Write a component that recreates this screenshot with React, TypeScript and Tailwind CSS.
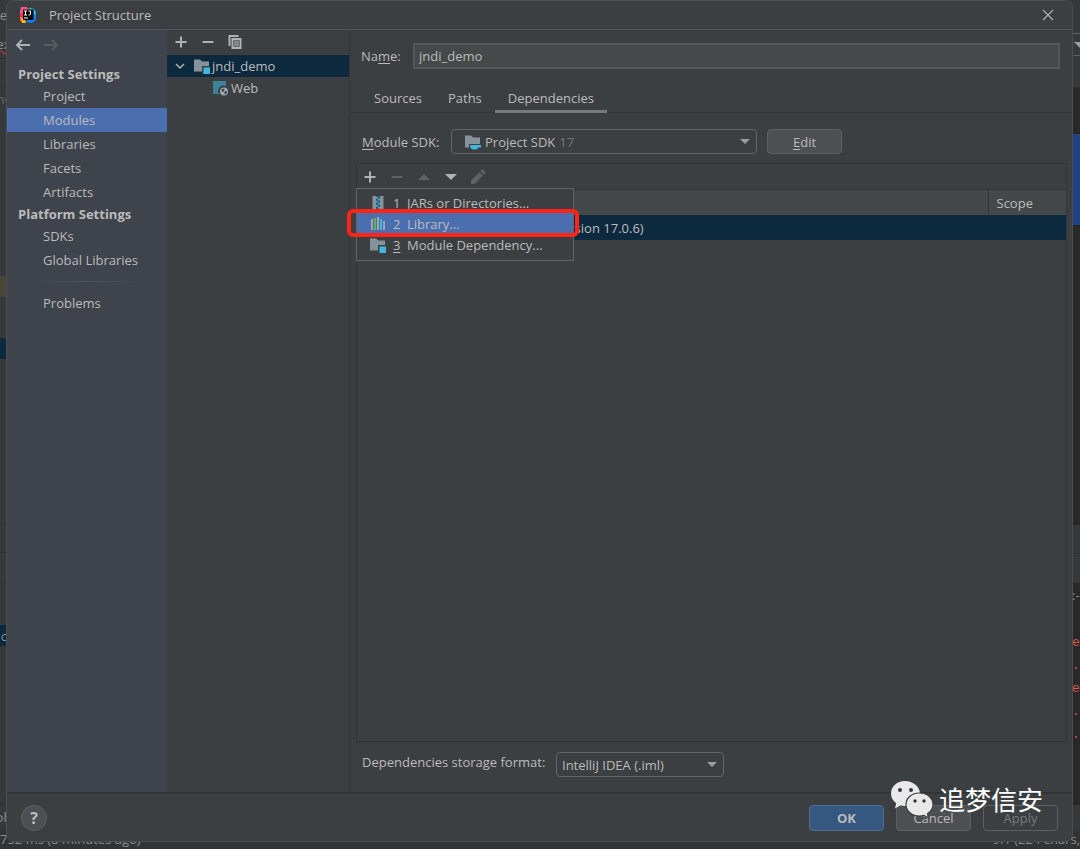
import { useState } from 'react';
import type { ReactNode } from 'react';

const settingsGroups = [
  { title: 'Project Settings', items: ['Project', 'Modules', 'Libraries', 'Facets', 'Artifacts'] },
  { title: 'Platform Settings', items: ['SDKs', 'Global Libraries'] },
];

const tabs = ['Sources', 'Paths', 'Dependencies'];

function IdeaLogo() {
  return (
    <svg className="w-[18px] h-[18px]" viewBox="0 0 18 18">
      <path d="M1 4 6 1l6 3-6 6-5 1z" fill="#fc801d" />
      <path d="M1 6 6 4v10l-2 3-3-2z" fill="#fe2857" />
      <path d="M2 1h6L7 6 1 8z" fill="#ff4f9a" />
      <path d="M11 1l6 4v9l-4 3-6-1 6-7z" fill="#0a84ff" />
      <path d="M10 2l5 1 2 5-4 1z" fill="#21c7e8" />
      <path d="M1 11l5 2 1 4-4 0z" fill="#fdb60d" />
      <rect x="4" y="3.500" width="10.500" height="10.500" fill="#0b0508" />
      <path d="M5 5h3M6.500 5v4M5 9h3M9.500 5h2v3q0 1-1 1H9.500M5 12h4" stroke="#fff" strokeWidth="1" fill="none" />
    </svg>
  );
}

function FolderIcon({ badge }: { badge: 'module' | 'sdk' }) {
  return (
    <svg className="w-4 h-4 shrink-0" viewBox="0 0 16 16">
      <path d="M0 1.500h6l2 2h7v10H0z" fill="#87939a" />
      {badge === 'module' ? (
        <>
          <path d="M8 8h8v8H8z" fill="#3c3f41" />
          <path d="M9.500 9.500H16V16H9.500z" fill="#40b6e0" />
        </>
      ) : (
        <>
          <path d="M4 10h12v6H4z" fill="#3c3f41" />
          <path d="M5 11h11v2.500h-2.500Q12.500 15.500 10.500 15.500H8Q5 15 5 11z" fill="#40b6e0" />
        </>
      )}
    </svg>
  );
}

function WebIcon() {
  return (
    <svg className="w-4 h-4 shrink-0" viewBox="0 0 16 16">
      <path d="M0 1h13v5.500A5 5 0 0 0 6.500 14H0z" fill="#3d8299" />
      <circle cx="11" cy="11.500" r="4" fill="#9aa7b0" />
      <path d="M8.500 9.500l2-1 1 1-1 2-1.500.5zM11.500 11.500l2-.5.5 1.500-1.500 2-1-1z" fill="#3c3f41" />
    </svg>
  );
}

function ArchiveIcon() {
  return (
    <svg className="w-4 h-4 shrink-0" viewBox="0 0 16 16">
      <path d="M2.500 1h3.500v14H2.500zM10 1h3.500v14H10z" fill="#87939a" />
      <path d="M6 1h4v14H6z" fill="#35596b" />
      <path d="M6 2h2v1.500H6zM8 4h2v1.500H8zM6 6h2v1.500H6zM8 8h2v1.500H8zM6 10h2v1.500H6zM8 12h2v1.500H8z" fill="#40b6e0" />
    </svg>
  );
}

function LibraryIcon() {
  return (
    <svg className="w-4 h-4 shrink-0" viewBox="0 0 16 16">
      <path d="M1 3h2v11H1zM7 1h2v13H7zM13 5h2v9h-2z" fill="#9aa7b0" />
      <path d="M4 2h2v12H4z" fill="#62b543" />
      <path d="M10 3h2v11h-2z" fill="#40b6e0" />
    </svg>
  );
}

function Glyph({ d, className }: { d: string; className: string }) {
  return (
    <svg className={`w-4 h-4 shrink-0 ${className}`} viewBox="0 0 16 16" fill="none" stroke="currentColor" strokeWidth={2}>
      <path d={d} />
    </svg>
  );
}

const PLUS = 'M8 2.500v11M2.500 8h11';
const MINUS = 'M2.500 8h11';

function Triangle({ up = false, className }: { up?: boolean; className: string }) {
  return (
    <svg className={`shrink-0 ${className}`} viewBox="0 0 12 6" fill="currentColor">
      <path d={up ? 'M0 6 6 0l6 6z' : 'M0 0h12L6 6z'} />
    </svg>
  );
}

function Mnemonic({ children }: { children: ReactNode }) {
  return <span className="underline underline-offset-2">{children}</span>;
}

// Slivers of the IDE window that stay visible around the dialog
function IdeBackdrop() {
  return (
    <div className="absolute inset-0 flex flex-col bg-[#36393b] text-[#8b8e90]" aria-hidden="true">
      <div className="flex-1 flex justify-between min-h-0">
        <div className="w-[7px] flex flex-col overflow-hidden">
          <div className="h-[30px] shrink-0 flex items-center justify-end">e</div>
          <div className="h-[29px] shrink-0 flex items-center justify-center border-b border-[#2d2f30]">
            <span className="underline decoration-wavy decoration-[#a33a3a]">ex</span>
          </div>
          <div className="h-7 shrink-0 border-b border-[#2d2f30]" />
          <div className="h-6 shrink-0 flex items-center justify-center text-[#66696b]">nc</div>
          <div className="h-[165px] shrink-0" />
          <div className="h-[21px] shrink-0 bg-[#49453a]" />
          <div className="h-[41px] shrink-0" />
          <div className="h-[21px] shrink-0 bg-[#0d293e]" />
          <div className="h-[166px] shrink-0 border-b border-[#2d2f30]" />
          <div className="h-7 shrink-0 border-b border-[#2d2f30]" />
          <div className="h-[30px] shrink-0 border-b border-[#2d2f30]" />
          <div className="h-[42px] shrink-0" />
          <div className="h-[21px] shrink-0 flex items-center justify-end bg-[#0d293e]">c</div>
          <div className="flex-1 border-b border-[#2d2f30]" />
          <div className="h-[24px] shrink-0 flex items-center justify-center">ob</div>
        </div>
        <div className="w-[8px] flex flex-col overflow-hidden bg-[#282828]">
          <div className="h-[33px] shrink-0 bg-[#36393b]" />
          <div className="h-[23px] shrink-0 flex items-center border-y border-[#5e6163] bg-[#36393b] pl-0.5">
            <Triangle className="w-3 h-1.5 text-[#9a9da0]" />
          </div>
          <div className="h-[32px] shrink-0 border-b border-[#2d2f30] bg-[#36393b]" />
          <div className="h-[46px] shrink-0" />
          <div className="h-[91px] shrink-0 bg-[#214283]" />
          <div className="h-[300px] shrink-0" />
          <div className="h-[29px] shrink-0 border-b border-[#2d2f30] bg-[#36393b]" />
          <div className="h-[29px] shrink-0 bg-[#36393b]" />
          <div className="h-6 shrink-0 flex items-center">:-</div>
          <div className="h-6 shrink-0" />
          <div className="flex-1 flex flex-col font-['Liberation_Mono',monospace] leading-[23px] text-[#e05252]">
            <span>e</span>
            <span>..</span>
            <span>e</span>
            <span>..</span>
            <span>..</span>
          </div>
          <div className="h-[24px] shrink-0 bg-[#36393b]" />
        </div>
      </div>
      <div className="h-[20px] shrink-0 flex items-center justify-between bg-[#313435] whitespace-nowrap">
        <span>752 ms (8 minutes ago)</span>
        <span>9:1 (224 chars,</span>
      </div>
    </div>
  );
}

function TitleBar() {
  return (
    <header className="h-[29px] shrink-0 flex items-center border-b border-[#515456] pl-3 pr-4">
      <IdeaLogo />
      <h1 className="ml-3 flex-1">Project Structure</h1>
      <button aria-label="Close">
        <svg className="w-4 h-4 text-[#afb1b3]" viewBox="0 0 16 16" stroke="currentColor" strokeWidth="1.200">
          <path d="M3 3l10 10M13 3L3 13" />
        </svg>
      </button>
    </header>
  );
}

function Sidebar({ selected, onSelect }: { selected: string; onSelect: (item: string) => void }) {
  const itemClass = (item: string) =>
    `h-6 w-full flex items-center pl-9 text-left ${item === selected ? 'bg-[#4b6eaf]' : ''}`;

  return (
    <nav className="w-[160px] shrink-0 bg-[#3e434c]">
      <div className="h-[34px] flex items-start gap-3 pl-2 pt-[7px]">
        <button aria-label="Back">
          <Glyph className="text-[#afb1b3]" d="M15 8H2M7 3 2 8l5 5" />
        </button>
        <button aria-label="Forward" disabled>
          <Glyph className="text-[#5a5d60]" d="M1 8h13M9 3l5 5-5 5" />
        </button>
      </div>
      {settingsGroups.map((group) => (
        <section key={group.title}>
          <h2 className="h-5 flex items-center pl-[11px] font-bold">{group.title}</h2>
          {group.items.map((item) => (
            <button key={item} className={itemClass(item)} onClick={() => onSelect(item)}>
              {item}
            </button>
          ))}
        </section>
      ))}
      <div className="mx-3 my-[9px] h-px bg-linear-to-r from-transparent via-[#4f535a] to-transparent" />
      <button className={itemClass('Problems')} onClick={() => onSelect('Problems')}>
        Problems
      </button>
    </nav>
  );
}

function ModuleTree() {
  return (
    <div className="w-[183px] shrink-0 border-r border-[#323537]">
      <div className="h-[25px] flex items-center gap-[11px] pl-1.5 pb-0.5">
        <button aria-label="Add module">
          <Glyph className="text-[#afb1b3]" d={PLUS} />
        </button>
        <button aria-label="Remove module">
          <Glyph className="text-[#afb1b3]" d={MINUS} />
        </button>
        <button aria-label="Copy module">
          <svg className="w-4 h-4" viewBox="0 0 16 16">
            <path d="M1.500 1h10v2h-8v9h-2z" fill="#afb1b3" />
            <path d="M4.500 4h10v11h-10z" fill="#afb1b3" />
            <path d="M6.500 6.500h6v6h-6z" fill="#85888a" stroke="#6a6d70" />
          </svg>
        </button>
      </div>
      <ul>
        <li className="h-[22px] flex items-center bg-[#0d293e] pl-[7px]">
          <svg className="w-3 h-3 text-[#afb1b3]" viewBox="0 0 12 12" fill="none" stroke="currentColor" strokeWidth="1.500">
            <path d="M2 4l4 4 4-4" />
          </svg>
          <span className="ml-2 flex items-center gap-0.5">
            <FolderIcon badge="module" />
            jndi_demo
          </span>
        </li>
        <li className="h-[22px] flex items-center gap-0.5 pl-[46px]">
          <WebIcon />
          Web
        </li>
      </ul>
    </div>
  );
}

function AddMenu() {
  return (
    <div className="absolute -left-px top-[24px] z-10 w-[218px] border border-[#616365] bg-[#3c3f41] pt-[3px] pb-[5px]" role="menu">
      <button role="menuitem" className="h-[21px] w-full flex items-center pl-[13px]">
        <ArchiveIcon />
        <span className="ml-[7px] w-[14px] text-left"><Mnemonic>1</Mnemonic></span>
        JARs or Directories...
      </button>
      <button role="menuitem" className="h-[21px] w-full flex items-center pl-[13px] bg-[#4b6eaf]">
        <LibraryIcon />
        <span className="ml-[7px] w-[14px] text-left">2</span>
        Library...
      </button>
      <button role="menuitem" className="h-[21px] w-full flex items-center pl-[13px]">
        <FolderIcon badge="module" />
        <span className="ml-[7px] w-[14px] text-left"><Mnemonic>3</Mnemonic></span>
        Module Dependency...
      </button>
      <div className="pointer-events-none absolute -left-2.5 top-5 h-7 w-[232px] rounded-md border-4 border-[#fb2416]" />
    </div>
  );
}

function DependenciesPanel() {
  return (
    <div className="relative flex-1 mt-[9px] ml-1.5 mr-[5px] border border-[#323537]">
      <div className="h-[26px] flex items-center gap-[11px] border-b border-[#323537] pl-[5px]">
        <button aria-label="Add dependency">
          <Glyph className="text-[#afb1b3]" d={PLUS} />
        </button>
        <button aria-label="Remove dependency" disabled>
          <Glyph className="text-[#5f6264]" d={MINUS} />
        </button>
        <button aria-label="Move up" className="px-0.5" disabled>
          <Triangle up className="w-3 h-1.5 text-[#5f6264]" />
        </button>
        <button aria-label="Move down" className="px-0.5">
          <Triangle className="w-3 h-1.5 text-[#afb1b3]" />
        </button>
        <button aria-label="Edit dependency" disabled>
          <svg className="w-4 h-4" viewBox="0 0 16 16" fill="#5f6264">
            <path d="M1 15v-3.500L9.500 3l3.500 3.500L4.500 15zM10.500 2l1.200-1.200q.8-.6 1.600 0l1.900 1.900q.6.800 0 1.600L14 5.500z" />
          </svg>
        </button>
      </div>
      <AddMenu />
      <table className="w-full table-fixed text-left">
        <thead>
          <tr className="h-[25px] bg-[#45484a]">
            <th aria-label="Export" />
            <th className="w-[78px] border-l border-[#323537] pl-2 font-normal">Scope</th>
          </tr>
        </thead>
        <tbody>
          <tr className="h-[25px] bg-[#0d293e]">
            <td className="pl-[76px]">17 (Oracle OpenJDK version 17.0.6)</td>
            <td />
          </tr>
        </tbody>
      </table>
    </div>
  );
}

function ModuleEditor() {
  const [name, setName] = useState('jndi_demo');
  const [activeTab, setActiveTab] = useState('Dependencies');

  return (
    <main className="flex-1 min-w-0 flex flex-col">
      <div className="flex items-center pt-[13px] pl-[11px] pr-3">
        <label htmlFor="module-name" className="w-[52px] shrink-0">
          Na<Mnemonic>m</Mnemonic>e:
        </label>
        <input
          id="module-name"
          value={name}
          onChange={(e) => setName(e.target.value)}
          className="h-[26px] min-w-0 flex-1 border-2 border-[#55585a] bg-[#45494a] px-1 outline-none"
        />
      </div>

      <div className="mt-[15px] flex h-[29px] border-b border-[#323537] pl-[11px]" role="tablist">
        {tabs.map((tab) => (
          <button
            key={tab}
            role="tab"
            aria-selected={tab === activeTab}
            onClick={() => setActiveTab(tab)}
            className={`h-[29px] border-b-3 px-[13px] pt-0.5 ${tab === activeTab ? 'border-[#747a80]' : 'border-transparent'}`}
          >
            {tab}
          </button>
        ))}
      </div>

      <div className="mt-4 flex items-center pl-3">
        <label htmlFor="module-sdk" className="w-[89px] shrink-0">
          <Mnemonic>M</Mnemonic>odule SDK:
        </label>
        <div className="h-[25px] w-[306px] flex items-center rounded-sm border border-[#646668] pl-[13px] pr-1.5">
          <FolderIcon badge="sdk" />
          <select id="module-sdk" className="ml-1 appearance-none field-sizing-content bg-transparent outline-none">
            <option>Project SDK</option>
          </select>
          <span className="ml-1 text-[#787a7c]">17</span>
          <Triangle className="ml-auto w-2.5 h-[5px] text-[#9a9da0]" />
        </div>
        <button className="ml-2.5 h-[25px] w-[75px] rounded-sm border border-[#5e6060] bg-[#4c5052]">
          <Mnemonic>E</Mnemonic>dit
        </button>
      </div>

      <DependenciesPanel />

      <div className="mt-2.5 mb-[15px] flex items-start pl-3">
        <label htmlFor="storage-format" className="w-[194px] shrink-0">
          Dependencies storage format:
        </label>
        <div className="h-[25px] w-[168px] flex items-center rounded-sm border border-[#646668] pl-[5px] pr-1.5">
          <select id="storage-format" className="flex-1 appearance-none bg-transparent outline-none">
            <option>IntelliJ IDEA (.iml)</option>
            <option>Eclipse (.classpath)</option>
          </select>
          <Triangle className="w-2.5 h-[5px] text-[#9a9da0]" />
        </div>
      </div>
    </main>
  );
}

function Watermark() {
  return (
    <div className="pointer-events-none absolute right-[29px] bottom-[22px] flex items-center gap-1.5 text-white">
      <svg className="w-[44px] h-[40px]" viewBox="0 0 44 40">
        <path d="M16 2C8 2 2 7.500 2 14.500c0 4 2 7.500 5.200 9.800L6 29.500l5.600-3.200c1.400.4 3 .6 4.400.6 8 0 15-5.500 15-12.400S24 2 16 2z" fill="#e9e9e9" />
        <path d="M30.500 14C23 14 17 19 17 25.500S23 37 30.500 37c1.500 0 3-.2 4.400-.6L39.500 39l-1-4.200c3.200-2.200 5.500-5.400 5.500-9.300C44 19 38 14 30.500 14z" fill="#e9e9e9" stroke="#3c3f41" strokeWidth="1.200" />
        <g fill="#35383a">
          <circle cx="11" cy="11" r="2" />
          <circle cx="22" cy="11" r="2" />
          <circle cx="26" cy="22" r="1.700" />
          <circle cx="35" cy="22" r="1.700" />
        </g>
      </svg>
      <span className="font-['Noto_Sans_CJK_SC',sans-serif] text-[26px] leading-10">追梦信安</span>
    </div>
  );
}

function Footer() {
  return (
    <footer className="h-[49px] shrink-0 flex items-center gap-3 border-t-2 border-[#323537] px-[14px]">
      <button aria-label="Help" className="mr-auto h-[26px] w-[26px] rounded-full border border-[#5e6060] bg-[#4c5052] text-base font-bold leading-6">
        ?
      </button>
      <button className="h-[26px] w-[75px] rounded-sm border border-[#4c708c] bg-[#365880] font-bold">OK</button>
      <button className="h-[26px] w-[75px] rounded-sm border border-[#5e6060] bg-[#4c5052]">Cancel</button>
      <button className="h-[26px] w-[75px] rounded-sm border border-[#5e6060] text-[#777a7c]" disabled>
        Apply
      </button>
    </footer>
  );
}

export default function App() {
  const [section, setSection] = useState('Modules');

  return (
    <div className="relative h-screen flex flex-col overflow-hidden font-['Open_Sans',sans-serif] text-[13px] leading-5 text-[#bbbbbb]">
      <IdeBackdrop />
      <div className="relative flex-1 min-h-0 ml-1.5 mr-[7px] mb-[7px] flex flex-col overflow-hidden rounded-lg border border-[#4c4f51] bg-[#3c3f41]">
        <TitleBar />
        <div className="flex-1 min-h-0 flex">
          <Sidebar selected={section} onSelect={setSection} />
          <ModuleTree />
          <ModuleEditor />
        </div>
        <Footer />
        <Watermark />
      </div>
    </div>
  );
}
